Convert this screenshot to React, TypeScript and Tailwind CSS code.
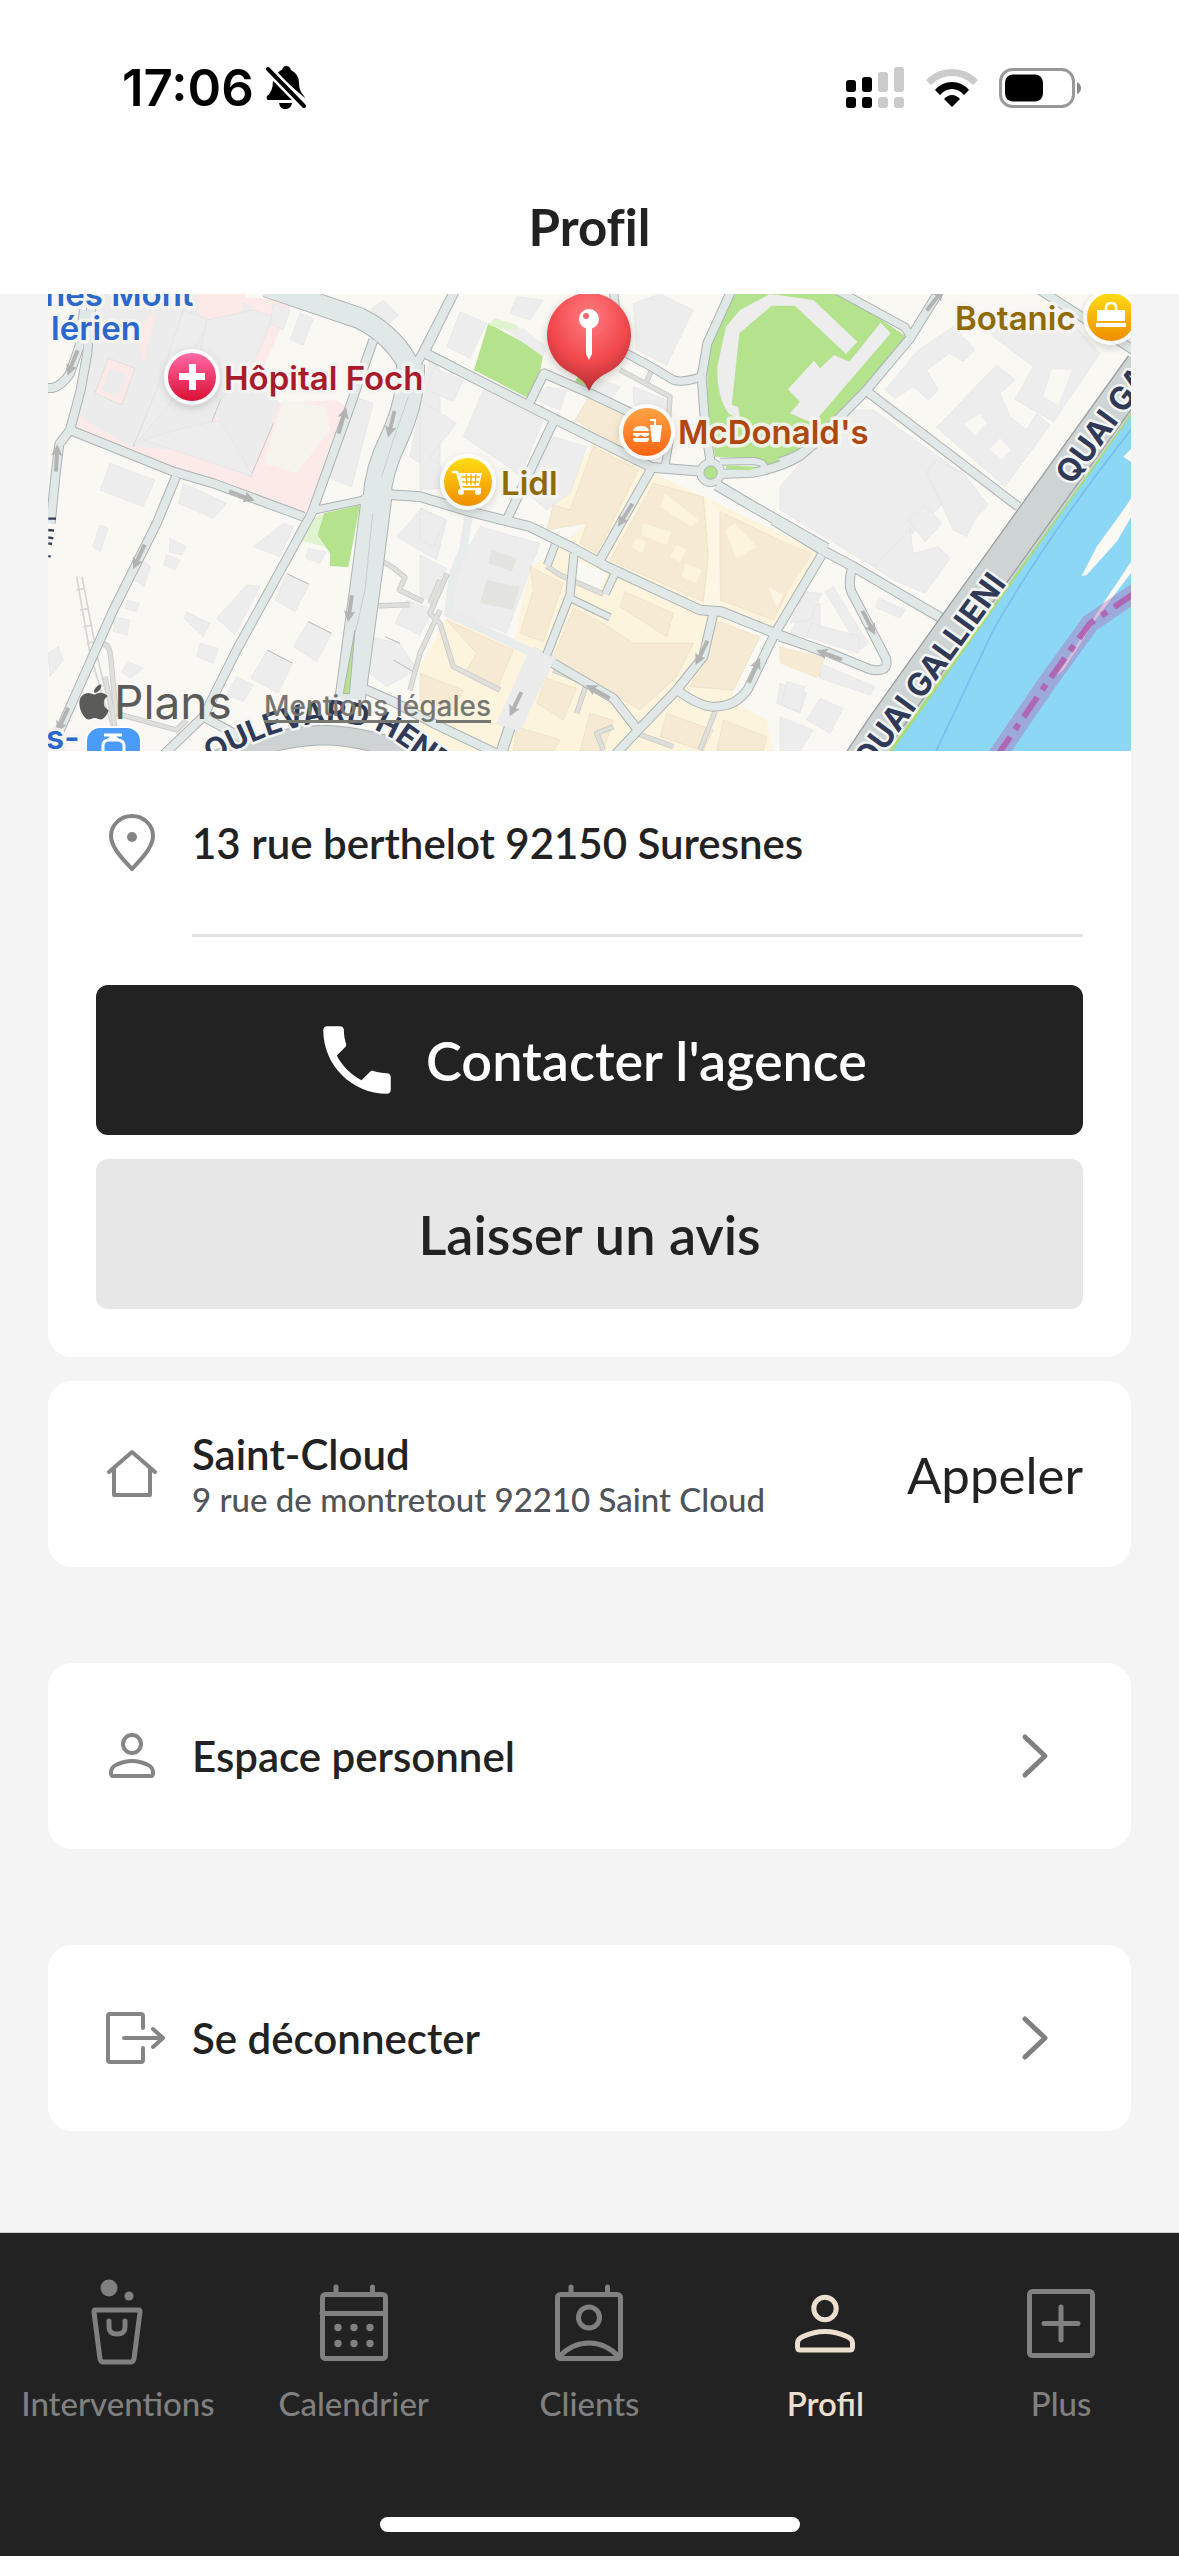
import type { ReactNode } from 'react'
import { clsx } from 'clsx'
import { FaApple } from 'react-icons/fa'
import { MdPhone } from 'react-icons/md'

type RoadProps = { d: string; w: number }

// Map geometry is drawn on a 3x grid, west / centre / east sheets are shifted on x
const CENTER = 1140
const EAST = 2220

const westRoads: RoadProps[] = [
  { d: 'M90 420 L400 545 L520 580 L790 680', w: 24 },
  { d: 'M158 0 L142 190 L122 300 L90 420 L58 462 L46 560 L32 700', w: 24 },
  { d: 'M0 295 L36 294 Q66 288 90 250 L118 170 L132 60', w: 24 },
  { d: 'M408 560 L350 700 L220 960 L60 1320 L20 1400', w: 24 },
  { d: 'M1000 150 L930 350 L815 670 L700 880 L590 1080 L490 1280 L370 1395', w: 24 },
  { d: 'M815 662 L970 630', w: 20 },
  { d: 'M490 1280 L600 1340', w: 24 },
  { d: 'M970 1195 L1060 1235 L1180 1300 L1380 1395', w: 24 },
  { d: 'M1120 240 L1150 185 L1230 30', w: 24 },
  { d: 'M1150 185 L1240 230', w: 22 },
]

const centerRoads: RoadProps[] = [
  { d: 'M105 0 L12 188 L400 385 L695 532 L870 546', w: 26 },
  { d: 'M-90 614 L0 620 L150 665 L330 710 L460 775 L560 830 L840 960 L905 965 L1065 1030 L1220 1088', w: 26 },
  { d: 'M405 385 L260 690', w: 24 },
  { d: 'M330 335 L372 250 L510 310 L640 372 L720 430', w: 24 },
  { d: 'M695 535 L540 810', w: 24 },
  { d: 'M580 0 L600 180 L690 228 L760 270 Q790 280 850 258', w: 22 },
  { d: 'M935 0 L862 160 L845 260 L855 400 L872 520', w: 24 },
  { d: 'M735 530 L750 440', w: 20 },
  { d: 'M890 585 L1000 650 L1220 775', w: 28 },
  { d: 'M900 515 L1000 513 Q1040 518 1030 535', w: 18 },
  { d: 'M900 552 L1000 548 Q1090 530 1140 498 L1220 430', w: 24 },
  { d: 'M1205 795 L1065 1030 L985 1195 Q950 1250 880 1250 Q840 1250 770 1200', w: 24 },
  { d: 'M880 970 L850 1100 L770 1200 L650 1325 L580 1400', w: 24 },
  { d: 'M462 790 L450 915 L380 1095', w: 22 },
  { d: 'M452 925 L570 982', w: 18 },
  { d: 'M405 765 L382 826', w: 20 },
  { d: 'M585 850 L556 912', w: 20 },
  { d: 'M400 1120 L580 1225 L650 1315', w: 24 },
  { d: 'M270 1310 L240 1400', w: 30 },
]

const eastRoads: RoadProps[] = [
  { d: 'M0 516 Q60 500 100 462 L260 300 L390 145 L480 0', w: 24 },
  { d: 'M170 0 L375 112 L392 140', w: 22 },
  { d: 'M262 305 L715 650', w: 24 },
  { d: 'M-20 690 L130 782 L220 830 L485 985', w: 26 },
  { d: 'M0 1040 L140 1085 L270 1138 Q330 1150 318 1105 L222 920 Q200 890 216 835', w: 24 },
  { d: 'M780 0 L1060 180', w: 24 },
]

const paths = [
  'M1000 948 L1110 944 M1030 815 L1062 835 L1095 862 L1078 900 L1150 935 M1200 960 L1140 1090 L1110 1200 M1170 940 L1200 870',
  'M190 1062 Q208 1062 212 1100 L228 1270 L410 1320 L440 1290 M195 1160 L225 1310',
  'M1222 850 L1170 970 L1200 1000 L1240 1130 L1380 1200',
  'M1520 828 L1560 855 L1690 912 M1740 240 L1890 320 L1885 400 M1835 240 L1820 275',
  'M1540 1140 L1640 1180 L1610 1270 M1720 1310 L1670 1330 L1690 1380 M1790 1330 L1900 1370 M2025 1265 L1980 1380',
]

const westBlocks = [
  '430,60 510,90 450,200 390,340 280,470 350,300',
  '640,60 700,80 640,220 540,330 470,240 500,90',
  '410,420 540,390 640,560 520,520 310,450',
  '700,40 750,60 730,120 690,100',
  '780,70 820,85 790,165 750,150',
  '210,520 345,570 310,650 180,600',
  '430,580 560,640 520,685 415,640',
  '180,705 205,715 180,785 158,770',
  '390,745 440,770 425,795 387,785',
  '380,795 420,810 405,840 370,825',
  '740,850 808,882 765,965 705,930',
  '805,995 875,1030 830,1115 760,1070',
  '682,1080 758,1120 715,1210 632,1165',
  '805,775 858,785 840,820 798,805',
  '620,885 660,890 585,1035 530,985',
  '260,930 298,940 290,965 255,955',
  '225,980 270,990 262,1035 220,1025',
  '440,965 510,1000 490,1040 432,985',
  '265,1115 310,1135 270,1165 245,1145',
  '480,1060 535,1075 520,1120 470,1100',
  '590,1160 640,1185 610,1235 560,1215',
  '990,60 1030,30 1075,75 1050,100',
  '940,320 1000,340 935,590 870,565',
  '1170,200 1200,240 1200,560 1110,500',
  '1145,655 1220,690 1190,810 1070,740',
  '1100,930 1180,960 1140,1035 1065,1000',
  '990,1040 1080,1060 1130,1140 1040,1190 980,1140',
  '55,1070 70,1110 30,1160 24,1090',
  '310,810 332,830 312,890 285,870',
  '730,700 760,710 720,800 640,770',
]

const centerBlocks = [
  '120,65 200,100 150,205 80,170',
  '290,20 370,30 330,90 270,70',
  '640,40 720,12 820,60 740,225 650,180',
  '40,235 130,270 100,335 20,300',
  '190,300 370,390 300,560 250,520 130,440',
  '400,440 500,470 450,610 380,660 310,600',
  '0,330 110,400 30,500 130,590 0,600',
  '0,655 75,690 40,770 0,750',
  '180,710 360,760 260,1030 85,960 130,800',
  '0,795 80,835 30,930 0,920',
  '380,290 440,300 420,360 345,330',
  '520,260 600,290 570,330 510,300',
  '640,290 740,330 735,430 640,340',
  '340,1070 410,1100 290,1330 230,1300',
  '1080,1180 1160,1210 1140,1270 1070,1240',
  '1150,960 1200,940 1200,1050 1110,1030',
]

const eastBlocks = [
  '415,180 520,110 585,180 550,215 510,190 440,240 475,300 445,330 400,290 345,325 315,300',
  '650,225 705,270 660,310 690,380 740,420 770,370 810,405 675,590 470,412',
  '600,60 700,120 870,90 960,190 820,395 705,328 760,230 640,140',
  '200,360 280,360 560,560 560,640 490,640 330,795 280,830 0,660 0,590',
  '440,545 470,512 550,550 625,645 590,680 560,740 520,720',
  '385,690 435,645 485,700 435,755',
  '390,715 400,790 475,770 510,805 435,910 340,870 280,830 320,790',
  '135,905 160,890 265,1060 240,1080',
  '75,905 125,910 90,990 30,1000',
  '95,1000 240,1040 235,1090 80,1040',
  '300,925 375,960 360,985 285,950',
  '20,1175 75,1190 60,1265 5,1245',
  '120,1225 190,1255 150,1330 80,1290',
  '0,1280 100,1320 60,1383 0,1383',
  '120,1120 285,1190 270,1215 120,1165',
]

const shopBlocks = [
  '505,325 610,370 590,460 465,390',
  '520,470 655,540 530,790 480,760 500,700 380,720 400,645 450,660',
  '700,580 850,620 865,800 850,935 570,810',
  '900,665 1110,765 1160,790 1060,990 900,930',
  '330,830 430,880 370,1055 300,1030 340,900',
  '460,955 550,1000 640,1060 820,1060 770,1160 660,1260 400,1100',
  '615,905 760,970 740,1040 600,950',
  '895,995 1020,1040 940,1200 810,1190',
  '80,990 280,1080 230,1200 140,1140 170,1090',
  '380,1165 470,1195 430,1290 350,1240',
  '290,1310 420,1350 400,1383 280,1383',
  '510,1270 580,1290 550,1383 480,1383',
  '740,1270 880,1320 850,1383 720,1340',
  '910,1290 1040,1340 1030,1383 890,1383',
  '0,1150 130,1200 100,1260 0,1230',
  '1080,1070 1210,1110 1200,1160 1080,1110',
]

// [x, y, rotation], pointing down at 0deg
const arrows = [
  [98, 218, 22], [50, 505, 183], [605, 618, -70], [297, 800, 25], [907, 392, 196],
  [1054, 402, 14], [930, 955, 8], [68, 1290, 25], [1756, 675, 32], [1985, 1088, 26],
  [2143, 1142, 204], [1674, 1205, 119], [1427, 1242, 26], [2368, 1095, 110],
  [2486, 998, -28], [2685, 30, 218],
]

const Blocks = ({ list, fill, stroke }: { list: string[]; fill: string; stroke: string }) => (
  <g fill={fill} stroke={stroke} strokeWidth={2} strokeDasharray="3 3">
    {list.map((points) => <polygon key={points} points={points} />)}
  </g>
)

const sheets = [
  { x: 0, roads: westRoads },
  { x: CENTER, roads: centerRoads },
  { x: EAST, roads: eastRoads },
]

const Roads = ({ casing }: { casing?: boolean }) => (
  <g fill="none" stroke={casing ? '#adb3b3' : '#e1e8e8'} strokeLinejoin="round">
    {sheets.map(({ x, roads }) => (
      <g key={x} transform={`translate(${x} 0)`}>
        {roads.map(({ d, w }) => <path key={d} d={d} strokeWidth={casing ? w + 6 : w} />)}
      </g>
    ))}
    <path d="M680 -10 L960 85 Q1070 140 1115 245" strokeWidth={casing ? 66 : 60} />
    <path d="M1112 225 Q1115 330 1060 450 Q1015 540 1010 630" strokeWidth={casing ? 86 : 80} />
    <path d="M1010 620 L985 820 L922 1290" strokeWidth={casing ? 94 : 88} />
  </g>
)

const MapGround = () => (
  <g transform="translate(-8 -4) scale(0.33333)">
    <rect width="3300" height="1400" fill="#f9f8f3" />
    <path d="M165 0 L760 30 L640 300 L720 340 L890 330 L930 360 L795 670 L520 575 L100 410 Z" fill="#fceae8" />
    <path d="M700 420 L730 330 L860 350 L870 420 L770 550 L670 520 Z" fill="#f6f4ec" />
    <path d="M160 0 L440 0 L620 40 L640 60 L600 200 L720 340 L630 560 L410 480 L270 470 L120 380 Z" fill="#edecec" />
    <path d="M205 205 L285 235 L245 345 L165 310 Z" fill="#fceae8" stroke="#d4d0d0" strokeDasharray="3 3" strokeWidth={3} />
    <path d="M210 235 L260 255 L235 320 L185 300 Z" fill="#edecec" />
    <path d="M470 12 L620 12 L570 160 L480 85 Z M520 370 L545 400 L515 475 L488 460 Z M350 60 L310 220 L290 120 Z" fill="#fceae8" />
    <path d="M430 60 L395 200 L280 470 M640 80 L490 460 M700 400 L632 560" fill="none" stroke="#c6c6c6" strokeWidth={3} />
    <Blocks list={westBlocks} fill="#eeeded" stroke="#d9d8d8" />
    <path d="M742 852 L806 882 M805 995 L875 1030 M682 1080 L758 1120 M1060 1110 L1120 1145 M1035 1040 L1080 1060" stroke="#b9b9b9" strokeWidth={3} />
    <path d="M852 670 L960 645 L925 832 L870 828 L870 790 L832 735 Z" fill="#b5e28d" />
    <path d="M852 670 L832 735 L855 770 L780 752 L815 690 Z" fill="#dff3cf" />

    <g transform={`translate(${CENTER} 0)`}>
      <path d="M690 545 L1210 790 L1065 1020 L900 980 L1010 1050 L930 1230 L1040 1290 L1060 1383 L0 1383 L0 1130 L80 985 L280 1060 L330 830 L400 790 L500 700 L400 640 L520 460 L470 380 L510 325 L620 380 L700 520 Z" fill="#fdf4de" />
      <Blocks list={centerBlocks} fill="#eeeded" stroke="#d9d8d8" />
      <path d="M215 780 L290 805 L275 845 L205 820 Z M200 870 L300 890 L280 960 L180 940 Z" fill="#e3e4e0" />
      <Blocks list={shopBlocks} fill="#f6ead2" stroke="#d8cdb4" />
      <path d="M735 610 L835 690 L815 710 L720 650 Z M670 700 L755 725 L740 765 L665 735 Z M650 745 L680 755 L665 790 L635 770 Z M770 765 L800 780 L780 815 L750 800 Z M795 820 L845 840 L830 880 L785 860 Z M945 700 L1010 770 L950 805 L915 720 Z" fill="#fdf4de" />
      <path d="M860 620 L895 660 L900 950 L850 950 L868 800 Z M1045 890 L1090 915 L1070 950 Z" fill="#fdf6e4" />
      <path d="M205 100 L370 190 L360 245 L325 325 L162 240 Z" fill="#b5e28d" />
      <path d="M205 105 L225 85 L290 105 L310 135 Z" fill="#dff3cf" />
      <path d="M255 120 L310 115 L380 170 L370 200 Z" fill="#eeeded" />
      <path d="M480 250 L520 265 L505 290 L465 275 Z" fill="#b5e28d" />
      <path d="M935 0 L1250 0 L1460 140 L1460 160 L1330 310 L1170 480 L1050 525 L1000 505 L885 500 L862 350 L862 180 Z" fill="#b5e28d" />
      <path d="M935 345 L955 350 L960 390 L925 370 Q890 320 892 230 L918 110 L960 60 L1050 12 L1180 30 L1312 155 L1278 192 L1125 47 L1055 47 L958 130 Z" fill="#eeeded" />
      <path d="M1382 98 L1412 130 L1180 400 L1110 370 L1140 335 L1104 298 L1182 212 L1200 235 L1242 195 L1288 215 Z" fill="#eeeded" />
      <path d="M145 680 L130 780 L100 850 L85 970 L330 1085" fill="none" stroke="#e9eced" strokeWidth={26} />
      <path d="M470 810 L560 850 L540 900 L465 870 Z" fill="#f9f8f3" />
    </g>

    <g transform={`translate(${EAST} 0)`}>
      <Blocks list={eastBlocks} fill="#eeeded" stroke="#d9d8d8" />
      <path d="M600 372 L620 400 L585 435 L552 402 Z M660 445 L692 480 L665 508 L630 478 Z M815 238 L875 240 L835 345 L790 320 Z" fill="#f9f8f3" />
      <path d="M0 750 L100 790 L20 910 L0 900 Z M0 1070 L130 1100 L110 1165 L0 1120 Z" fill="#f6ead2" />
    </g>

    <g fill="none" stroke="#c9cac6" strokeWidth={16} strokeLinejoin="round">
      {paths.map((d) => <path key={d} d={d} />)}
    </g>
    <g fill="none" stroke="#dfe0db" strokeWidth={11} strokeLinejoin="round">
      {paths.map((d) => <path key={d} d={d} />)}
    </g>
    <path d="M110 860 L150 1090 L215 1310 M126 860 L170 1090 L195 1200 M110 900 L135 895 M120 960 L148 955 M130 1010 L158 1005 M140 1060 L168 1055 M150 1110 L175 1105" fill="none" stroke="#d5d5d1" strokeWidth={5} />

    <Roads casing />
    <circle cx={2012} cy={548} r={42} fill="#e1e8e8" stroke="#adb3b3" strokeWidth={3} />
    <Roads />
    <circle cx={2012} cy={548} r={20} fill="#b5e28d" stroke="#adb3b3" strokeWidth={3} />
    <path d="M2058 526 L2150 530 L2130 541 L2058 538 Z" fill="#b5e28d" />
    <path d="M1470 1075 L1545 1105 L1440 1325 L1370 1300 Z" fill="#ececec" />
    <path d="M945 1020 L928 1212 L910 1210 Z" fill="#b5e28d" stroke="#adb3b3" strokeWidth={3} />
    <path d="M998 670 L975 900 L948 1020 M1105 320 L1060 450 L1025 560" fill="none" stroke="#b9bebe" strokeWidth={2} />
    <path d="M530 1410 Q700 1340 850 1335 Q1010 1340 1180 1420" fill="none" stroke="#adb3b3" strokeWidth={62} />
    <path d="M530 1410 Q700 1340 850 1335 Q1010 1340 1180 1420" fill="none" stroke="#cdd4d3" strokeWidth={56} />
    <path d="M25 686 L48 686 M25 720 L42 722 M25 742 L40 745 M25 760 L36 762 M25 798 L32 800" stroke="#303a57" strokeWidth={7} />

    <g transform={`translate(${EAST} 0)`}>
      <path d="M320 1400 L1070 345 L1070 1400 Z" fill="#8cd6f6" stroke="#a7dc7a" strokeWidth={10} />
      <path d="M190 1400 L270 1280 L480 985 L1045 198 L1070 205 L1070 345 L860 640 L320 1390 Z" fill="#cdd4d3" />
      <path d="M190 1400 L270 1280 L480 985 L1045 198 M330 1365 L1070 335" fill="none" stroke="#9aa0a1" strokeWidth={4} />
      <path d="M465 1390 Q560 1190 640 1020 Q800 740 1060 410" fill="none" stroke="#74c0ee" strokeWidth={5} />
      <path d="M1060 615 L1030 660 L950 770 L905 858 L920 855 L1010 755 L1060 670 Z M1060 805 L1030 850 L970 940 L880 1080 L830 1155 L850 1140 L950 985 L1060 840 Z M1060 470 L1030 500 L1060 520 Z" fill="#faf9f4" />
      <path d="M650 1400 L800 1180 L930 1000 L1070 905" fill="none" stroke="#b268b4" strokeOpacity={0.4} strokeWidth={56} />
      <path d="M650 1400 L800 1180 L930 1000 L1070 905" fill="none" stroke="#b25fae" strokeOpacity={0.9} strokeWidth={18} strokeDasharray="72 26 20 26" />
    </g>

    <g fill="#b3b3b3">
      {arrows.map(([x, y, r]) => (
        <path key={`${x}-${y}`} transform={`translate(${x} ${y}) rotate(${r})`} d="M-6 -40 H6 V12 L17 8 L0 42 L-17 8 L-6 12 Z" />
      ))}
    </g>
  </g>
)

type PoiProps = { x: number; y: number; from: string; to: string; children: ReactNode }

const Poi = ({ x, y, from, to, children }: PoiProps) => (
  <g transform={`translate(${x} ${y})`}>
    <circle r={28} fill="#fff" fillOpacity={0.8} filter="url(#soft)" />
    <linearGradient id={`poi-${x}`} x1="0" y1="0" x2="0" y2="1">
      <stop offset="0" stopColor={from} />
      <stop offset="1" stopColor={to} />
    </linearGradient>
    <circle r={24} fill={`url(#poi-${x})`} />
    {children}
  </g>
)

const AgencyMap = () => (
  <div className="relative h-[457px] overflow-hidden">
    <svg viewBox="0 0 1083 457" preserveAspectRatio="xMidYMid slice" className="block size-full" role="img" aria-label="Plan de l'agence">
      <defs>
        <filter id="soft" x="-50%" y="-50%" width="200%" height="200%">
          <feDropShadow dx="0" dy="3" stdDeviation="4" floodOpacity="0.2" />
        </filter>
        <radialGradient id="pin" cx="0.5" cy="0.25" r="0.75">
          <stop offset="0" stopColor="#ff7d80" />
          <stop offset="0.6" stopColor="#f2494e" />
          <stop offset="1" stopColor="#b02c33" />
        </radialGradient>
        <path id="boulevard" d="M163 469 Q232 430 285 428 Q325 430 352 450 L440 512" />
      </defs>
      <MapGround />

      <g className="font-['Inter',sans-serif] font-bold" fill="#303a57" stroke="#f4f6f6" strokeWidth={5} strokeLinejoin="round" style={{ paintOrder: 'stroke' }}>
        <text className="text-[30px]"><textPath href="#boulevard">OULEVARD HENRI</textPath></text>
        <text className="text-[32px]" transform="translate(822 478) rotate(-54)">QUAI GALLIENI</text>
        <text className="text-[32px]" transform="translate(1024 192) rotate(-54)">QUAI GALLIENI</text>
      </g>

      <g className="font-['Inter',sans-serif] text-[33px] font-semibold" stroke="#f6f5f2" strokeOpacity={0.9} strokeWidth={7} strokeLinejoin="round" style={{ paintOrder: 'stroke' }}>
        <text x={-3} y={12} fill="#2c67cb">nes Mont</text>
        <text x={3} y={46} fill="#2c67cb">lérien</text>
        <text x={-2} y={455} fill="#2c67cb">s-</text>
        <text x={176} y={96} fill="#a81b2c">Hôpital Foch</text>
        <text x={453} y={201} fill="#8f6a05">Lidl</text>
        <text x={630} y={150} fill="#b0470f">McDonald's</text>
        <text x={907} y={36} fill="#8f6a05">Botanic</text>
      </g>

      <g>
        <rect x={37} y={432} width={57} height={50} rx={15} fill="#fff" fillOpacity={0.8} />
        <rect x={39} y={434} width={53} height={50} rx={13} fill="#4b9bfb" />
        <path d="M56 441 H74 M60 446 L65 442 L70 446 M55 460 V452 Q55 446 61 446 H69 Q76 446 76 452 V460" fill="none" stroke="#fff" strokeWidth={3} />
      </g>

      <Poi x={144} y={83} from="#ff6aa8" to="#dc0f33">
        <path d="M-3 -13 H4 V-4 H13 V3 H4 V13 H-3 V3 H-13 V-4 H-3 Z" fill="#fff" />
      </Poi>
      <Poi x={420} y={188} from="#ffdc14" to="#ef8d00">
        <path d="M-15 -10 H-11 L-6 7 H12" fill="none" stroke="#fff" strokeWidth={2.5} strokeLinecap="round" />
        <path d="M-9 -9 H14 L11 4 H-6 Z" fill="#fff" />
        <path d="M-7 -5 H12 M-6 0 H11 M-2 -8 L-1 3 M3 -8 V3 M8 -8 L7 3" stroke="#f9b80b" strokeWidth={1.5} />
        <circle cx={-7} cy={10} r={3} fill="#fff" />
        <circle cx={10} cy={10} r={3} fill="#fff" />
      </Poi>
      <Poi x={599} y={138} from="#ffa345" to="#fd6414">
        <path d="M-14 -1 Q-13 -6 -6 -6 Q1 -6 2 -1 Z M-14 1 H2 V3 L-2 5 L-6 3 L-10 5 L-14 3 Z M-14 6 H2 Q2 10 -1 10 H-11 Q-14 10 -14 6 Z" fill="#fff" />
        <path d="M3 -7 H15 L13 10 H5 Z" fill="#fff" />
        <path d="M3 -12 H8 V-7" fill="none" stroke="#fff" strokeWidth={2} />
      </Poi>
      <Poi x={1063} y={23} from="#ffdc14" to="#ef8d00">
        <path d="M-14 -7 H14 V4 H-14 Z M-15 6 H15 V10 H-15 Z" fill="#fff" />
        <path d="M-5 -7 V-9 Q-5 -14 0 -14 Q5 -14 5 -9 V-7" fill="none" stroke="#fff" strokeWidth={2.5} />
      </Poi>

      <path d="M541 97 Q536 85 523 79 A42 42 0 1 1 559 79 Q546 85 541 97 Z" fill="url(#pin)" filter="url(#soft)" />
      <path d="M538 34 H544 V60 L541 66 L538 60 Z" fill="#fff" />
      <circle cx={541} cy={25} r={10} fill="#fff" />
      <circle cx={538} cy={22} r={3} fill="#f9686c" />
    </svg>

    <div className="absolute bottom-6 left-[26px] flex items-center font-['Inter',sans-serif] text-[46px] leading-[50px] text-[#5b5b59]">
      <FaApple className="size-10" />
      Plans
    </div>
    <a href="#mentions" className="absolute bottom-[29px] left-[216px] font-['Inter',sans-serif] text-[28px] leading-8 font-medium text-[#777772] underline decoration-3 underline-offset-4">
      Mentions légales
    </a>
  </div>
)

const StatusBar = () => (
  <div className="flex h-[176px] items-center justify-between pr-[98px] pl-[122px]">
    <div className="flex items-center gap-3 font-['Inter',sans-serif] text-[51px] leading-[60px] font-semibold text-black">
      17:06
      <svg viewBox="0 0 40 44" className="h-11 w-10" aria-hidden="true">
        <path d="M11 8 Q14 4 16 4 Q17 0 20 0 Q24 0 25 4 Q33 8 33 17 Q33 25 38 30 L39 32 Z" />
        <path d="M7 14 L28 34 H2 Q0 33 1 30 Q7 26 7 14 Z" />
        <path d="M13 37 H26 Q25 43 19 43 Q14 43 13 37 Z" />
        <path d="M2 3 L38 40" stroke="#fff" strokeWidth={9} />
        <path d="M2 3 L38 40" stroke="#000" strokeWidth={4} strokeLinecap="round" />
      </svg>
    </div>
    <div className="flex items-center gap-[21px]">
      <svg viewBox="0 0 60 42" className="h-[42px] w-[60px]" aria-hidden="true">
        <g fill="#000">
          <rect x={1} y={13} width={10} height={12} rx={3} />
          <rect x={17} y={10} width={10} height={15} rx={3} />
          <rect x={1} y={30} width={10} height={11} rx={3} />
          <rect x={17} y={30} width={10} height={11} rx={3} />
        </g>
        <g fill="#cbcbcb">
          <rect x={33} y={5} width={10} height={20} rx={3} />
          <rect x={49} y={0} width={10} height={25} rx={3} />
          <rect x={33} y={30} width={10} height={11} rx={3} />
          <rect x={49} y={30} width={10} height={11} rx={3} />
        </g>
      </svg>
      <svg viewBox="0 0 52 38" className="h-[38px] w-[52px]" aria-hidden="true">
        <path d="M0 11 Q11 0 26 0 Q41 0 52 11 L47 16 Q38 7 26 7 Q14 7 5 16 Z" fill="#cbcbcb" />
        <path d="M9 21 Q16 13 26 13 Q36 13 43 21 L38 26 Q33 20 26 20 Q19 20 14 26 Z" />
        <path d="M18 30 Q22 26 26 26 Q30 26 34 30 L26 38 Z" />
      </svg>
      <svg viewBox="0 0 82 40" className="h-10 w-[82px]" aria-hidden="true">
        <rect x={1.5} y={1.5} width={73} height={37} rx={12} fill="none" stroke="#999" strokeWidth={3} />
        <rect x={6} y={6.5} width={38} height={27} rx={8} />
        <path d="M78 14 Q82 16 82 20 Q82 24 78 26 Z" fill="#8a8a8a" />
      </svg>
    </div>
  </div>
)

// 72px row icons
const rowIcon = {
  className: 'size-[72px] shrink-0 text-[#858585]',
  viewBox: '0 0 72 72',
  fill: 'none',
  stroke: 'currentColor',
  strokeWidth: 4,
  strokeLinecap: 'round',
  strokeLinejoin: 'round',
  'aria-hidden': true,
} as const

const PinIcon = () => (
  <svg {...rowIcon}>
    <path d="M36 62 C31 56 15 42 15 29 A21 20 0 0 1 57 29 C57 42 41 56 36 62 Z" />
    <circle cx={36} cy={30} r={5} fill="currentColor" stroke="none" />
  </svg>
)

const HomeIcon = () => (
  <svg {...rowIcon}>
    <path d="M13 34 L36 14 L59 34 M18 31 V57 H54 V31" />
  </svg>
)

const UserIcon = () => (
  <svg {...rowIcon}>
    <circle cx={36} cy={24} r={9} />
    <path d="M17 56 H55 Q57 56 57 53 Q57 47 52 45 Q44 41 36 41 Q28 41 20 45 Q15 47 15 53 Q15 56 17 56 Z" />
  </svg>
)

const LogoutIcon = () => (
  <svg {...rowIcon}>
    <path d="M47 26 V14 Q47 12 45 12 H14 Q12 12 12 14 V58 Q12 60 14 60 H45 Q47 60 47 58 V46 M28 36 H66 M57 27 L67 36 L57 45" />
  </svg>
)

const ChevronIcon = () => (
  <svg viewBox="0 0 28 46" className="mr-[34px] h-[46px] w-7 shrink-0 text-[#808080]" fill="none" stroke="currentColor" strokeWidth={5} strokeLinecap="round" strokeLinejoin="round" aria-hidden="true">
    <path d="M4 4 L24 23 L4 42" />
  </svg>
)

const MenuRow = ({ icon, label }: { icon: ReactNode; label: string }) => (
  <button type="button" className="mt-24 flex h-[186px] w-full items-center gap-6 rounded-3xl bg-white px-12 text-left">
    {icon}
    <span className="flex-1 text-[42px] leading-[50px] font-semibold">{label}</span>
    <ChevronIcon />
  </button>
)

const tabs = [
  {
    label: 'Interventions',
    icon: (
      <>
        <path d="M25 36 H69 Q70 36 70 38 L64 85 Q63 88 61 88 H33 Q31 88 30 85 L24 38 Q24 36 25 36 Z M39 47 V53 Q39 60 47 60 Q55 60 55 53 V47" />
        <circle cx={39} cy={14} r={8.5} fill="currentColor" stroke="none" />
        <circle cx={59} cy={22} r={4.6} fill="currentColor" stroke="none" />
      </>
    ),
  },
  {
    label: 'Calendrier',
    icon: (
      <>
        <rect x={16.5} y={20.5} width={63} height={64} rx={3} />
        <path d="M16 39.500 H79 M30 13 V20 M66.500 13 V20" />
        <g fill="currentColor" stroke="none">
          {[53.5, 69.5].map((cy) => [32, 48, 64].map((cx) => <circle key={`${cx}-${cy}`} cx={cx} cy={cy} r={3.7} />))}
        </g>
      </>
    ),
  },
  {
    label: 'Clients',
    icon: (
      <>
        <rect x={16.5} y={20.5} width={63} height={64} rx={3} />
        <path d="M30 13 V20 M66.500 13 V20 M18 83 Q31 69 48 69 Q65 69 78 83" />
        <circle cx={48} cy={43.5} r={10.5} />
      </>
    ),
  },
  {
    label: 'Profil',
    icon: (
      <>
        <circle cx={48} cy={34.5} r={11.2} />
        <path d="M23 76 H73 Q75.500 76 75.500 73 V69 Q75.500 65 70 62.500 Q59 57.500 48 57.500 Q37 57.500 26 62.500 Q20.500 65 20.500 69 V73 Q20.500 76 23 76 Z" />
      </>
    ),
  },
  {
    label: 'Plus',
    icon: (
      <>
        <rect x={16.5} y={17.5} width={63} height={64} rx={3} />
        <path d="M48 33 V66 M31 49.500 H65" />
      </>
    ),
  },
]

const TabBar = () => (
  <nav className="border-t border-[#cfcfcf] bg-[#222222] pt-[41px] pb-6">
    <div className="grid grid-cols-5">
      {tabs.map(({ label, icon }) => (
        <button
          key={label}
          type="button"
          aria-current={label === 'Profil' ? 'page' : undefined}
          className={clsx(
            'flex flex-col items-center gap-3 text-[33px] leading-[42px]',
            label === 'Profil' ? 'font-semibold text-[#ecdfd0]' : 'font-medium text-[#808080]'
          )}
        >
          <svg viewBox="0 0 96 96" className="size-24" fill="none" stroke="currentColor" strokeWidth={5} strokeLinecap="round" strokeLinejoin="round" aria-hidden="true">
            {icon}
          </svg>
          {label}
        </button>
      ))}
    </div>
    {/* home indicator */}
    <div className="mx-auto mt-[93px] h-[15px] w-[420px] rounded-full bg-white" />
  </nav>
)

export default function App() {
  return (
    <div className="flex min-h-screen flex-col bg-[#f4f4f4] font-['Lato',sans-serif] text-[#222222]">
      <header className="bg-white">
        <StatusBar />
        <h1 className="h-[118px] pt-5 text-center text-[51px] leading-[61px] font-bold [font-variant-ligatures:none]">Profil</h1>
      </header>

      <main className="flex-1 px-12">
        <section className="overflow-hidden rounded-b-3xl bg-white pb-12">
          <AgencyMap />
          <div className="mx-12 flex h-[183px] items-center gap-6">
            <PinIcon />
            <p className="text-[42px] leading-[50px] font-semibold">13 rue berthelot 92150 Suresnes</p>
          </div>
          <div className="mr-12 ml-36 h-[3px] bg-[#e4e4e4]" />
          <div className="mx-12 mt-12 flex flex-col gap-6">
            <button type="button" className="flex h-[150px] items-center justify-center gap-6 rounded-xl bg-[#222222] text-[54px] leading-[65px] font-semibold text-white">
              <MdPhone className="size-[90px]" />
              Contacter l'agence
            </button>
            <button type="button" className="h-[150px] rounded-xl bg-[#e7e7e7] text-[54px] leading-[65px] font-semibold">
              Laisser un avis
            </button>
          </div>
        </section>

        <section className="mt-6 flex h-[186px] items-center gap-6 rounded-3xl bg-white px-12">
          <HomeIcon />
          <div className="flex-1">
            <h2 className="text-[42px] leading-[50px] font-semibold">Saint-Cloud</h2>
            <p className="text-[33px] leading-[41px] font-medium text-[#505459]">9 rue de montretout 92210 Saint Cloud</p>
          </div>
          <button type="button" className="text-[51px] leading-[61px]">Appeler</button>
        </section>

        <MenuRow icon={<UserIcon />} label="Espace personnel" />
        <MenuRow icon={<LogoutIcon />} label="Se déconnecter" />
      </main>

      <TabBar />
    </div>
  )
}
